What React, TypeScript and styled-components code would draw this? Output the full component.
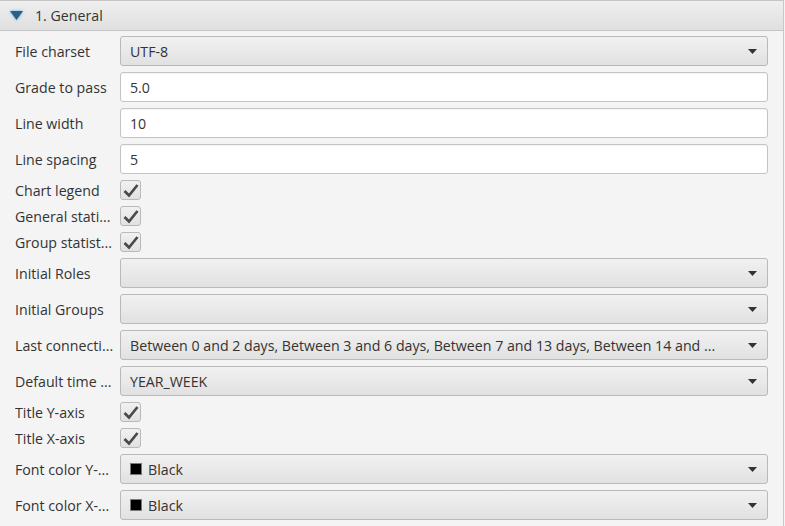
import React from "react";
import styled, { createGlobalStyle } from "styled-components";

const GlobalStyle = createGlobalStyle`
  html, body { margin: 0; padding: 0; background: #f4f4f4; }
  body { font-family: "Open Sans", "Noto Sans", sans-serif; color: #333333; }
  * { box-sizing: border-box; }
`;

const Pane = styled.div`
  width: 784px;
  height: 526px;
  border-right: 1px solid #c8c8c8;
  background: #f4f4f4;
  overflow: hidden;
`;

const Header = styled.div`
  height: 31px;
  border-top: 1px solid #c6c6c6;
  border-bottom: 1px solid #c6c6c6;
  background: linear-gradient(#eeeeee, #e0e0e0);
  display: flex;
  align-items: center;
  padding-left: 10px;
  gap: 12px;
  font-size: 14.2px;
  color: #333;
`;

const Arrow = styled.svg`
  width: 13px;
  height: 9px;
  filter: drop-shadow(0 0 1.5px #49b4ea);
`;

const Content = styled.div`
  padding: 5px 15px 0 15px;
  display: grid;
  grid-template-columns: 98px 1fr;
  column-gap: 7px;
  row-gap: 6px;
  align-items: center;
`;

const Label = styled.div`
  font-size: 14.2px;
  white-space: nowrap;
  overflow: hidden;
  color: #333;
`;

const Field = styled.div`
  height: 30px;
  border: 1px solid #c4c4c4;
  border-radius: 3px;
  background: #ffffff;
  display: flex;
  align-items: center;
  padding-left: 9px;
  font-size: 14.2px;
  color: #333;
  box-shadow: inset 0 1px 1px rgba(0,0,0,0.04);
`;

const Combo = styled.div`
  height: 30px;
  border: 1px solid #b9b9b9;
  border-radius: 3px;
  background: linear-gradient(#f1f1f1, #e1e1e1);
  display: flex;
  align-items: center;
  padding: 0 10px 0 9px;
  font-size: 14.2px;
  color: #333;
`;

const ComboText = styled.span`
  flex: 1;
  white-space: nowrap;
  overflow: hidden;
  display: flex;
  align-items: center;
  gap: 6px;
`;

const Swatch = styled.span`
  width: 12px;
  height: 12px;
  background: #000;
  border: 1px solid #7a7a7a;
  display: inline-block;
`;

const ComboArrow = styled.svg`
  width: 9px;
  height: 5px;
  flex: none;
`;

const CheckBox = styled.div`
  width: 21px;
  height: 20px;
  border: 1px solid #b9b9b9;
  border-radius: 3px;
  background: linear-gradient(#f1f1f1, #e1e1e1);
  display: flex;
  align-items: center;
  justify-content: center;
`;

type Row =
  | { kind: "combo"; label: string; value?: string; swatch?: boolean }
  | { kind: "field"; label: string; value: string }
  | { kind: "check"; label: string };

const rows: Row[] = [
  { kind: "combo", label: "File charset", value: "UTF-8" },
  { kind: "field", label: "Grade to pass", value: "5.0" },
  { kind: "field", label: "Line width", value: "10" },
  { kind: "field", label: "Line spacing", value: "5" },
  { kind: "check", label: "Chart legend" },
  { kind: "check", label: "General stati..." },
  { kind: "check", label: "Group statist..." },
  { kind: "combo", label: "Initial Roles" },
  { kind: "combo", label: "Initial Groups" },
  {
    kind: "combo",
    label: "Last connecti...",
    value:
      "Between 0 and 2 days, Between 3 and 6 days, Between 7 and 13 days, Between 14 and ...",
  },
  { kind: "combo", label: "Default time ...", value: "YEAR_WEEK" },
  { kind: "check", label: "Title Y-axis" },
  { kind: "check", label: "Title X-axis" },
  { kind: "combo", label: "Font color Y-...", value: "Black", swatch: true },
  { kind: "combo", label: "Font color X-...", value: "Black", swatch: true },
];

const Check = () => (
  <svg width="16" height="15" viewBox="0 0 16 15">
    <path d="M1.5 8 L6 12.5 L14.5 2" fill="none" stroke="#4a4a4a" strokeWidth="2.7" />
  </svg>
);

export default function App() {
  return (
    <>
      <GlobalStyle />
      <Pane>
        <Header>
          <Arrow viewBox="0 0 13 9">
            <path d="M0 0 L13 0 L6.5 9 Z" fill="#2c5f84" />
          </Arrow>
          <span>1. General</span>
        </Header>
        <Content>
          {rows.map((r, i) => (
            <React.Fragment key={i}>
              <Label>{r.label}</Label>
              {r.kind === "field" && <Field>{r.value}</Field>}
              {r.kind === "check" && (
                <CheckBox>
                  <Check />
                </CheckBox>
              )}
              {r.kind === "combo" && (
                <Combo>
                  <ComboText>
                    {r.swatch && <Swatch />}
                    {r.value}
                  </ComboText>
                  <ComboArrow viewBox="0 0 9 5">
                    <path d="M0 0 L9 0 L4.5 5 Z" fill="#333" />
                  </ComboArrow>
                </Combo>
              )}
            </React.Fragment>
          ))}
        </Content>
      </Pane>
    </>
  );
}
